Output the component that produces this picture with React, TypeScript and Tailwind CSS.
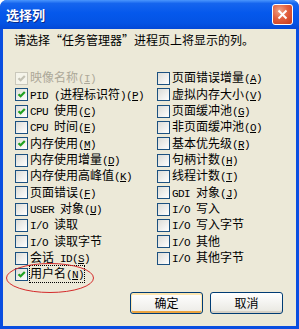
import React from 'react';

type Column = {
  text: string;
  accel?: string;
  checked?: boolean;
  disabled?: boolean;
  focused?: boolean;
};

const LEFT: Column[] = [
  { text: '映像名称', accel: 'I', checked: true, disabled: true },
  { text: 'PID (进程标识符)', accel: 'P', checked: true },
  { text: 'CPU 使用', accel: 'C', checked: true },
  { text: 'CPU 时间', accel: 'E' },
  { text: '内存使用', accel: 'M', checked: true },
  { text: '内存使用增量', accel: 'D' },
  { text: '内存使用高峰值', accel: 'K' },
  { text: '页面错误', accel: 'F' },
  { text: 'USER 对象', accel: 'U' },
  { text: 'I/O 读取' },
  { text: 'I/O 读取字节' },
  { text: '会话 ID', accel: 'S' },
  { text: '用户名', accel: 'N', checked: true, focused: true },
];

const RIGHT: Column[] = [
  { text: '页面错误增量', accel: 'A' },
  { text: '虚拟内存大小', accel: 'V' },
  { text: '页面缓冲池', accel: 'G' },
  { text: '非页面缓冲池', accel: 'O' },
  { text: '基本优先级', accel: 'R' },
  { text: '句柄计数', accel: 'H' },
  { text: '线程计数', accel: 'T' },
  { text: 'GDI 对象', accel: 'J' },
  { text: 'I/O 写入' },
  { text: 'I/O 写入字节' },
  { text: 'I/O 其他' },
  { text: 'I/O 其他字节' },
];

// SimSun-like: latin runs are half width, so they get a narrow mono face
const Latin = ({ children }: { children: React.ReactNode }) => (
  <span className="font-['Liberation_Mono',monospace] text-[11px] tracking-[-0.6px]">{children}</span>
);

const Mixed = ({ text }: { text: string }) => {
  const parts = text.match(/[\x00-\x7f]+|[^\x00-\x7f]+/g) ?? [];
  return (
    <>
      {parts.map((p, i) =>
        /^[\x00-\x7f]/.test(p) ? <Latin key={i}>{p}</Latin> : <span key={i}>{p}</span>
      )}
    </>
  );
};

const CheckBox = ({ checked, disabled }: { checked?: boolean; disabled?: boolean }) => (
  <span
    className={
      disabled
        ? 'w-[13px] h-[13px] shrink-0 border border-[#cac8bb] bg-[#f5f4ea] flex items-center justify-center'
        : 'w-[13px] h-[13px] shrink-0 border border-[#1c5180] bg-gradient-to-br from-[#dcdcd7] to-white flex items-center justify-center'
    }
  >
    {checked && (
      <svg width="9" height="9" viewBox="0 0 9 9">
        <path
          d="M1.5 4.2 L3.6 6.3 L7.8 2"
          fill="none"
          stroke={disabled ? '#c4c2b4' : '#21a121'}
          strokeWidth="2.2"
        />
      </svg>
    )}
  </span>
);

const Row = ({ col }: { col: Column }) => (
  <div className="h-[16.33px] flex items-center gap-[1px]">
    <CheckBox checked={col.checked} disabled={col.disabled} />
    <span
      className={`leading-[13px] whitespace-nowrap border ${
        col.focused ? 'border-dotted border-black' : 'border-transparent'
      } ${col.disabled ? 'text-[#aca899]' : 'text-black'}`}
    >
      <Mixed text={col.text} />
      {col.accel && (
        <Latin>
          (<u className="underline-offset-[1px]">{col.accel}</u>)
        </Latin>
      )}
    </span>
  </div>
);

const XpButton = ({ label, isDefault }: { label: string; isDefault?: boolean }) => (
  <button
    className={
      isDefault
        ? 'w-[73px] h-[22px] rounded-[3px] border border-[#003c74] bg-gradient-to-b from-white to-[#ecebe6] shadow-[inset_0_1px_0_1px_#fde6b0,inset_0_-1px_0_1px_#eba441] text-[12px] text-black'
        : 'w-[73px] h-[22px] rounded-[3px] border border-[#003c74] bg-gradient-to-b from-white to-[#e8e7e0] shadow-[inset_0_-2px_0_0_#d6d0c5] text-[12px] text-black'
    }
  >
    {label}
  </button>
);

export default function App() {
  return (
    <div className="w-[299px] h-[329px] bg-white font-['Noto_Sans_CJK_SC',sans-serif] text-[12px]">
      <div className="relative h-full flex flex-col rounded-t-[7px] overflow-hidden bg-[#0a4ee0]">
        {/* Title bar */}
        <div className="h-[29px] shrink-0 flex items-center pl-[6px] pr-[6px] bg-[linear-gradient(180deg,#4a96fd_0%,#1565ee_12%,#0558ec_45%,#0453e4_80%,#0348d6_100%)]">
          <span className="text-white font-bold text-[13px] leading-none [text-shadow:1px_1px_0_#0b2a8a]">
            选择列
          </span>
          <button className="ml-auto w-[21px] h-[21px] rounded-[3px] border border-white bg-[radial-gradient(circle_at_35%_30%,#f0a488_0%,#e2603f_45%,#c6391a_100%)] flex items-center justify-center">
            <svg width="11" height="11" viewBox="0 0 11 11">
              <path d="M1.5 1.5 L9.5 9.5 M9.5 1.5 L1.5 9.5" stroke="white" strokeWidth="2" />
            </svg>
          </button>
        </div>

        {/* Body */}
        <div className="flex-1 mx-[3px] mb-[3px] bg-[#ece9d8] flex flex-col pl-[11px] pr-[13px] pt-[4px]">
          <div className="h-[14px] leading-[14px] text-black">请选择“任务管理器”进程页上将显示的列。</div>

          <div className="mt-[23.3px] ml-[1px] flex">
            <div className="w-[142px] flex flex-col">
              {LEFT.map((c) => (
                <Row key={c.text} col={c} />
              ))}
            </div>
            <div className="flex flex-col">
              {RIGHT.map((c) => (
                <Row key={c.text} col={c} />
              ))}
            </div>
          </div>

          <div className="mt-[9.4px] flex justify-end gap-[7px]">
            <XpButton label="确定" isDefault />
            <XpButton label="取消" />
          </div>
        </div>

        {/* red annotation ring */}
        <svg className="absolute left-[5px] top-[262px]" width="90" height="32" viewBox="0 0 90 32">
          <ellipse cx="45" cy="16" rx="43.5" ry="14.5" fill="none" stroke="#d42b2b" strokeWidth="1" />
        </svg>
      </div>
    </div>
  );
}
